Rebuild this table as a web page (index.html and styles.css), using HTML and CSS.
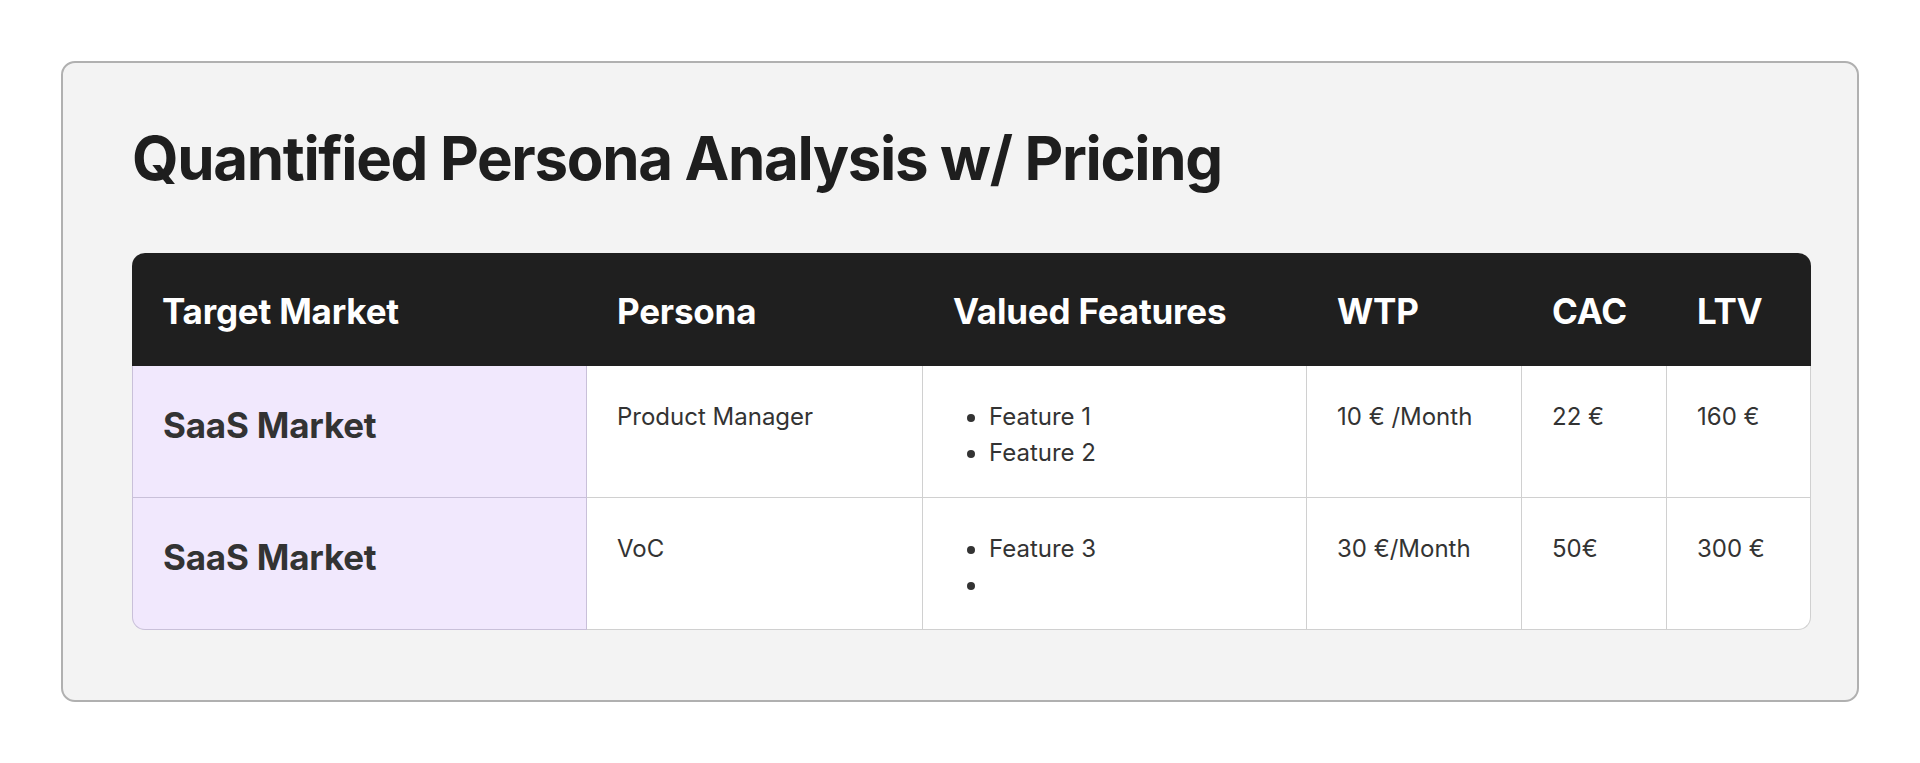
FILE: index.html
```html
<!DOCTYPE html>
<html lang="en">
<head>
<meta charset="utf-8">
<title>Quantified Persona Analysis w/ Pricing</title>
<link rel="stylesheet" href="styles.css">
</head>
<body>
<main class="card">
  <h1 class="title">Quantified Persona Analysis w/ Pricing</h1>
  <table class="grid">
    <colgroup>
      <col class="c-market">
      <col class="c-persona">
      <col class="c-features">
      <col class="c-wtp">
      <col class="c-cac">
      <col class="c-ltv">
    </colgroup>
    <thead>
      <tr>
        <th>Target Market</th>
        <th>Persona</th>
        <th>Valued Features</th>
        <th>WTP</th>
        <th>CAC</th>
        <th>LTV</th>
      </tr>
    </thead>
    <tbody>
      <tr>
        <td class="market">SaaS Market</td>
        <td>Product Manager</td>
        <td><ul class="feats"><li>Feature 1</li><li>Feature 2</li></ul></td>
        <td>10 € /Month</td>
        <td>22 €</td>
        <td>160 €</td>
      </tr>
      <tr>
        <td class="market">SaaS Market</td>
        <td>VoC</td>
        <td><ul class="feats"><li>Feature 3</li><li></li></ul></td>
        <td>30 €/Month</td>
        <td>50€</td>
        <td>300 €</td>
      </tr>
    </tbody>
  </table>
</main>
</body>
</html>
```

FILE: styles.css
```css
html, body {
  margin: 0;
  padding: 0;
  background: #ffffff;
}

body {
  font-family: Inter, "Noto Sans", "Liberation Sans", sans-serif;
  color: #333333;
}

.card {
  margin: 61px 61px 0 61px;
  box-sizing: border-box;
  height: 641px;
  border: 2px solid #b0b0b0;
  border-radius: 14px;
  background: #f3f3f3;
  padding: 59px 46px 0 69px;
}

.title {
  margin: 0 0 59px 0;
  font-size: 60px;
  line-height: 72px;
  font-weight: 700;
  color: #1e1e1e;
  letter-spacing: -1.35px;
}

.grid {
  width: 1679px;
  table-layout: fixed;
  border-collapse: separate;
  border-spacing: 0;
}

.c-market { width: 455px; }
.c-persona { width: 336px; }
.c-features { width: 384px; }
.c-wtp { width: 215px; }
.c-cac { width: 145px; }
.c-ltv { width: 144px; }

.grid th {
  background: #1f1f1f;
  color: #ffffff;
  font-size: 35px;
  line-height: 54px;
  font-weight: 700;
  text-align: left;
  padding: 31px 30px 28px 30px;
  letter-spacing: -0.2px;
}

.grid th:first-child { border-top-left-radius: 13px; }
.grid th:last-child { border-top-right-radius: 13px; }

.grid td {
  background: #ffffff;
  font-size: 24px;
  line-height: 36px;
  font-weight: 400;
  vertical-align: top;
  padding: 33px 30px 26px 30px;
  border-right: 1px solid #d0d0d0;
  border-bottom: 1px solid #d0d0d0;
  color: #333333;
}

.grid td.market {
  background: #f1e8fd;
  border-left: 1px solid #c9c0d9;
  border-right: 1px solid #c9c0d9;
  border-bottom: 1px solid #c9c0d9;
  font-size: 35px;
  line-height: 52px;
  font-weight: 700;
  color: #333333;
  letter-spacing: -0.2px;
}

.grid tbody tr:last-child td:first-child { border-bottom-left-radius: 13px; }
.grid tbody tr:last-child td:last-child { border-bottom-right-radius: 13px; }

.feats {
  margin: 0;
  padding-left: 36px;
}

.feats li {
  min-height: 36px;
}
```
